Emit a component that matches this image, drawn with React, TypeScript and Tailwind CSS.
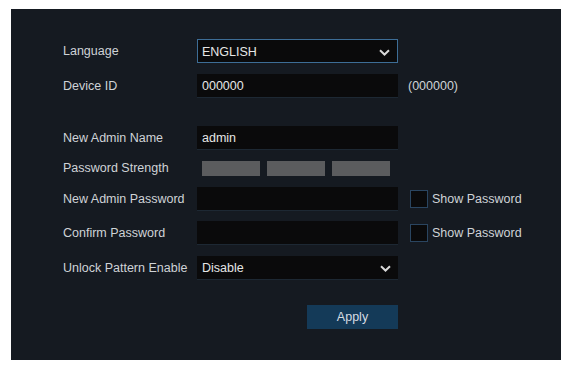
import React from "react";

const font = { fontFamily: '"Liberation Sans", Arial, sans-serif' };

function Chevron() {
  return (
    <svg width="11" height="7" viewBox="0 0 11 7" className="mr-[7px]">
      <path d="M1 1.2 L5.5 5.5 L10 1.2" fill="none" stroke="#d9d9d9" strokeWidth="2" />
    </svg>
  );
}

function Row({ label, children }: { label: string; children: React.ReactNode }) {
  return (
    <div className="flex h-6 items-center whitespace-nowrap">
      <div className="w-[134px] shrink-0 pt-px text-[12.5px] text-[#cfd3d7]">{label}</div>
      {children}
    </div>
  );
}

function Field({ value }: { value?: string }) {
  return (
    <div className="flex h-6 w-[201px] shrink-0 items-center border-b border-[#1d2833] bg-[#0a0a0b] pl-[5px] pt-[2px] text-[12.5px] text-[#e6e6e6]">
      {value}
    </div>
  );
}

function ShowPassword() {
  return (
    <div className="ml-3 flex shrink-0 items-center gap-1 text-[12.5px] text-[#cfd3d7]">
      <div className="h-[18px] w-[18px] border border-[#2a4560] bg-[#0a0a0b]" />
      <span>Show Password</span>
    </div>
  );
}

export default function App() {
  return (
    <div className="h-[366px] w-[584px] bg-white pl-[11px] pt-[9px]" style={font}>
      <div className="h-[351px] w-[550px] bg-[#151a21] pl-[52px] pt-[30px]">
        <Row label="Language">
          <div className="flex h-6 w-[201px] shrink-0 items-center justify-between border border-[#3d6d96] bg-[#0a0a0b] pl-1 pt-[2px] text-[12.5px] text-[#e6e6e6]">
            <span>ENGLISH</span>
            <Chevron />
          </div>
        </Row>
        <div className="mt-[11px]">
          <Row label="Device ID">
            <Field value="000000" />
            <span className="ml-[10px] text-[12.5px] text-[#cfd3d7]">(000000)</span>
          </Row>
        </div>
        <div className="mt-7">
          <Row label="New Admin Name">
            <Field value="admin" />
          </Row>
        </div>
        <div className="mt-[6px]">
          <Row label="Password Strength">
            <div className="flex gap-[7px] pl-[5px]">
              <div className="h-[15px] w-[58px] bg-[#5b5c5e]" />
              <div className="h-[15px] w-[58px] bg-[#5b5c5e]" />
              <div className="h-[15px] w-[58px] bg-[#5b5c5e]" />
            </div>
          </Row>
        </div>
        <div className="mt-[7px]">
          <Row label="New Admin Password">
            <Field />
            <ShowPassword />
          </Row>
        </div>
        <div className="mt-[10px]">
          <Row label="Confirm Password">
            <Field />
            <ShowPassword />
          </Row>
        </div>
        <div className="mt-[11px]">
          <Row label="Unlock Pattern Enable">
            <div className="flex h-6 w-[201px] shrink-0 items-center justify-between border-b border-[#1d2833] bg-[#0a0a0b] pl-[5px] pt-[2px] text-[12.5px] text-[#e6e6e6]">
              <span>Disable</span>
              <Chevron />
            </div>
          </Row>
        </div>
        <div className="mt-[25px] flex pl-[244px]">
          <button type="button" className="h-6 w-[91px] bg-[#143a58] text-[12.5px] text-[#d6dde3]">
            Apply
          </button>
        </div>
      </div>
    </div>
  );
}
